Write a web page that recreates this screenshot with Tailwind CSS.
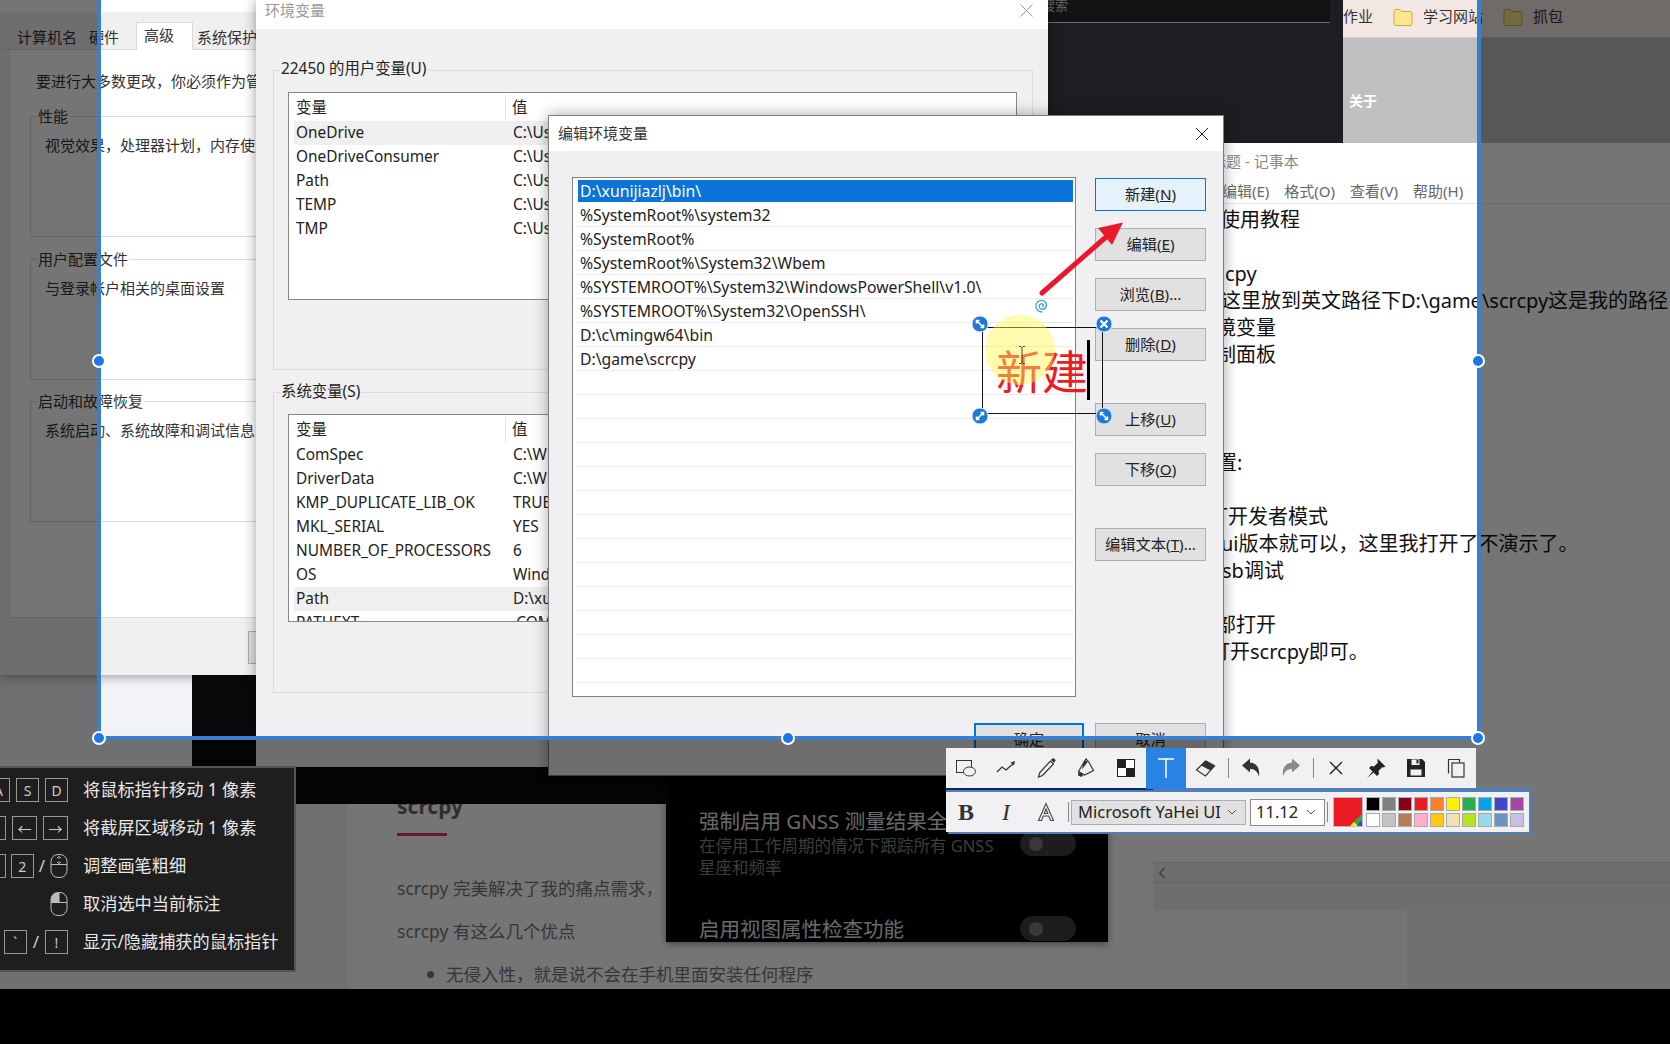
<!DOCTYPE html>
<html lang="zh">
<head>
<meta charset="utf-8">
<title>编辑环境变量</title>
<script src="https://cdn.jsdelivr.net/npm/@tailwindcss/browser@4"></script>
</head>
<body class="bg-black">
<div class="relative w-[1670px] h-[1044px] overflow-hidden bg-[#f2f3f7] text-[15px] text-[#222] font-['Noto_Sans','Noto_Sans_CJK_SC',sans-serif]">

  <!-- web article behind everything -->
  <section class="absolute left-[347px] top-[767px] w-[1060px] h-[222px] bg-white pl-[50px] pt-[25px] text-[#777] text-[17.500px]">
    <h2 class="text-[21px] font-bold text-[#666] leading-[28px]">scrcpy</h2>
    <div class="w-[50px] h-[3px] bg-[#e8385f] mt-[13px]"></div>
    <p class="mt-[38px] leading-[28px]">scrcpy 完美解决了我的痛点需求，</p>
    <p class="mt-[15px] leading-[28px]">scrcpy 有这么几个优点</p>
    <p class="mt-[15px] leading-[28px] flex items-center"><span class="w-[7px] h-[7px] rounded-full bg-[#777] ml-[30px] mr-[12px]"></span>无侵入性，就是说不会在手机里面安装任何程序</p>
  </section>

  <!-- dark window -->
  <div class="absolute left-[192px] top-0 w-[1151px] h-[804px] bg-[#0a0a0d]">
    <div class="h-[143px] bg-[#1e1e22]">
      <div class="h-[23px] bg-[#131316] border-b border-[#6d6d70] mr-[13px] pl-[850px] text-[13px] leading-[10px] text-[#666]">搜索</div>
    </div>
  </div>

  <!-- browser chrome -->
  <div class="absolute left-[1343px] top-0 w-[327px] h-[143px] bg-[#bfbec0]">
    <div class="h-[38px] pb-[4px] bg-[#f3e7e4] border-b border-[#d5cdcb] flex items-center text-[15px] text-[#333]">
      <span>作业</span>
      <svg class="ml-[20px]" width="20" height="20" viewBox="0 0 20 20"><path d="M1 4.500a2 2 0 0 1 2-2h4l2 2h8a2 2 0 0 1 2 2v10a2 2 0 0 1-2 2H3a2 2 0 0 1-2-2z" fill="#fde68f" stroke="#c9a94c"/></svg>
      <span class="ml-[10px] w-[62px] whitespace-nowrap">学习网站</span>
      <svg class="ml-[18px]" width="20" height="20" viewBox="0 0 20 20"><path d="M1 4.500a2 2 0 0 1 2-2h4l2 2h8a2 2 0 0 1 2 2v10a2 2 0 0 1-2 2H3a2 2 0 0 1-2-2z" fill="#fde68f" stroke="#c9a94c"/></svg>
      <span class="ml-[10px]">抓包</span>
    </div>
    <div class="pl-[6px] pt-[52px] text-[14px] font-bold text-white leading-[22px]">关于</div>
  </div>

  <!-- notepad -->
  <div class="absolute left-[1153px] top-[143px] w-[517px] h-[768px] bg-white flex flex-col">
    <div class="h-[37px] pl-[43px] flex items-center text-[15px] text-[#888] shrink-0">无标题 - 记事本</div>
    <div class="h-[24px] pl-[69px] flex gap-[15px] items-center text-[15px] text-[#666] border-b border-[#e4e4e4] shrink-0">
      <span>编辑(E)</span><span>格式(O)</span><span>查看(V)</span><span>帮助(H)</span>
    </div>
    <div class="flex-1 pt-[2px] text-[20px] leading-[27px] text-[#111] whitespace-nowrap">
      <p class="ml-[67px]">使用教程</p>
      <p class="h-[27px]"></p>
      <p class="ml-[72px]">cpy</p>
      <p class="ml-[68px]">这里放到英文路径下D:\game\scrcpy这是我的路径</p>
      <p class="ml-[63px]">境变量</p>
      <p class="ml-[63px]">制面板</p>
      <p class="h-[81px]"></p>
      <p class="ml-[64px]">置:</p>
      <p class="h-[27px]"></p>
      <p class="ml-[55px]">打开发者模式</p>
      <p class="ml-[68px]">ui版本就可以，这里我打开了不演示了。</p>
      <p class="ml-[69px]">sb调试</p>
      <p class="h-[27px]"></p>
      <p class="ml-[63px]">部打开</p>
      <p class="ml-[57px]">打开scrcpy即可。</p>
    </div>
    <div class="h-[20px] bg-[#f0f0f0] border-t border-[#ddd] flex items-center pl-[4px] shrink-0">
      <svg width="10" height="14" viewBox="0 0 10 14"><path d="M7.500 2 3 7l4.500 5" fill="none" stroke="#888" stroke-width="1.500"/></svg>
    </div>
    <div class="h-[29px] bg-[#f0f0f0] border-t border-[#d8d8d8] shrink-0"></div>
  </div>

  <!-- developer options panel -->
  <div class="absolute left-[666px] top-[776px] w-[442px] h-[166px] bg-black overflow-hidden shadow-[0_2px_8px_rgba(0,0,0,0.4)]">
    <div class="absolute left-[33px] top-[31px] w-[320px]">
      <div class="text-[20.500px] leading-[28px] text-[#e4e4e4] whitespace-nowrap">强制启用 GNSS 测量结果全</div>
      <div class="text-[16.500px] leading-[22px] text-[#858585] whitespace-nowrap">在停用工作周期的情况下跟踪所有 GNSS<br>星座和频率</div>
      <div class="text-[20.500px] leading-[28px] text-[#e4e4e4] mt-[36px]">启用视图属性检查功能</div>
    </div>
    <div class="absolute left-[354px] top-[55px] w-[56px] h-[25px] rounded-full bg-[#3f3f3f] flex items-center pl-[9px]"><span class="w-[14px] h-[14px] rounded-full bg-[#7a7a7a]"></span></div>
    <div class="absolute left-[354px] top-[140px] w-[56px] h-[25px] rounded-full bg-[#3f3f3f] flex items-center pl-[9px]"><span class="w-[14px] h-[14px] rounded-full bg-[#7a7a7a]"></span></div>
  </div>

  <!-- system properties window -->
  <div class="absolute left-0 top-0 w-[300px] h-[675px] bg-[#f0f0f0] shadow-[0_2px_10px_rgba(0,0,0,0.35)]">
    <div class="h-[12px] bg-white"></div>
    <div class="relative h-[38px] border-b border-[#d9d9d9] whitespace-nowrap text-[#333]">
      <span class="absolute left-[17px] top-[14px] leading-[22px]">计算机名</span>
      <span class="absolute left-[89px] top-[14px] leading-[22px]">硬件</span>
      <div class="absolute left-[136px] top-[10px] w-[57px] h-[29px] bg-white border border-b-0 border-[#d9d9d9] pl-[7px] leading-[24px]">高级</div>
      <span class="absolute left-[197px] top-[14px] leading-[22px]">系统保护</span>
    </div>
    <div class="relative ml-[10px] h-[568px] bg-white border-b border-[#d9d9d9] whitespace-nowrap text-[#333]">
      <p class="absolute left-[26px] top-[20px] leading-[22px]">要进行大多数更改，你必须作为管理员登录</p>
      <div class="absolute left-[20px] top-[66px] w-[280px] h-[121px] border border-[#dcdcdc]">
        <span class="absolute left-[6px] -top-[11px] px-[1px] bg-white leading-[20px]">性能</span>
        <p class="absolute left-[14px] top-[17px] leading-[22px]">视觉效果，处理器计划，内存使用</p>
      </div>
      <div class="absolute left-[20px] top-[209px] w-[280px] h-[121px] border border-[#dcdcdc]">
        <span class="absolute left-[6px] -top-[11px] px-[1px] bg-white leading-[20px]">用户配置文件</span>
        <p class="absolute left-[14px] top-[17px] leading-[22px]">与登录帐户相关的桌面设置</p>
      </div>
      <div class="absolute left-[20px] top-[351px] w-[280px] h-[121px] border border-[#dcdcdc]">
        <span class="absolute left-[6px] -top-[11px] px-[1px] bg-white leading-[20px]">启动和故障恢复</span>
        <p class="absolute left-[14px] top-[17px] leading-[22px]">系统启动、系统故障和调试信息</p>
      </div>
    </div>
    <div class="absolute left-[248px] top-[631px] w-[60px] h-[33px] bg-[#e1e1e1] border border-[#adadad]"></div>
  </div>

  <!-- environment variables window -->
  <div class="absolute left-[256px] top-0 w-[792px] h-[767px] bg-[#f0f0f2] text-[15.400px] shadow-[0_0_12px_rgba(0,0,0,0.4)]">
    <div class="h-[29px] bg-white flex items-center justify-between pl-[9px] pr-[15px] text-[#999] text-[15px]">
      <span class="-mt-[9px]">环境变量</span>
      <svg class="-mt-[9px]" width="13" height="13" viewBox="0 0 13 13"><path d="M.5.5l12 12M12.500.5l-12 12" stroke="#999"/></svg>
    </div>
    <!-- user vars -->
    <div class="relative ml-[17px] mt-[41px] w-[760px] h-[300px] border border-[#dcdcdc]">
      <span class="absolute left-[6px] -top-[13px] px-[1px] bg-[#f0f0f2] leading-[22px] whitespace-nowrap">22450 的用户变量(U)</span>
      <div class="absolute left-[14px] top-[21px] w-[729px] h-[208px] bg-white border border-[#888] pl-[5px] pt-[2px]">
        <div class="h-[26px] flex items-center pl-[2px]"><span class="w-[210px] border-r border-[#e5e5e5] h-full flex items-center">变量</span><span class="pl-[6px]">值</span></div>
        <div class="h-[24px] flex items-center pl-[2px] bg-[#efeff0]"><span class="w-[210px]">OneDrive</span><span class="pl-[7px]">C:\Users\22450\OneDrive</span></div>
        <div class="h-[24px] flex items-center pl-[2px]"><span class="w-[210px]">OneDriveConsumer</span><span class="pl-[7px]">C:\Users\22450\OneDrive</span></div>
        <div class="h-[24px] flex items-center pl-[2px]"><span class="w-[210px]">Path</span><span class="pl-[7px]">C:\Users\22450\AppData</span></div>
        <div class="h-[24px] flex items-center pl-[2px]"><span class="w-[210px]">TEMP</span><span class="pl-[7px]">C:\Users\22450\AppData</span></div>
        <div class="h-[24px] flex items-center pl-[2px]"><span class="w-[210px]">TMP</span><span class="pl-[7px]">C:\Users\22450\AppData</span></div>
      </div>
    </div>
    <!-- system vars -->
    <div class="relative ml-[17px] mt-[22px] w-[760px] h-[301px] border border-[#dcdcdc]">
      <span class="absolute left-[6px] -top-[12px] px-[1px] bg-[#f0f0f2] leading-[22px]">系统变量(S)</span>
      <div class="absolute left-[14px] top-[21px] w-[729px] h-[208px] bg-white border border-[#888] pl-[5px] pt-[2px] overflow-hidden">
        <div class="h-[26px] flex items-center pl-[2px]"><span class="w-[210px] border-r border-[#e5e5e5] h-full flex items-center">变量</span><span class="pl-[6px]">值</span></div>
        <div class="h-[24px] flex items-center pl-[2px]"><span class="w-[210px]">ComSpec</span><span class="pl-[7px]">C:\Windows\system32</span></div>
        <div class="h-[24px] flex items-center pl-[2px]"><span class="w-[210px]">DriverData</span><span class="pl-[7px]">C:\Windows\System32</span></div>
        <div class="h-[24px] flex items-center pl-[2px]"><span class="w-[210px]">KMP_DUPLICATE_LIB_OK</span><span class="pl-[7px]">TRUE</span></div>
        <div class="h-[24px] flex items-center pl-[2px]"><span class="w-[210px]">MKL_SERIAL</span><span class="pl-[7px]">YES</span></div>
        <div class="h-[24px] flex items-center pl-[2px]"><span class="w-[210px]">NUMBER_OF_PROCESSORS</span><span class="pl-[7px]">6</span></div>
        <div class="h-[24px] flex items-center pl-[2px]"><span class="w-[210px]">OS</span><span class="pl-[7px]">Windows_NT</span></div>
        <div class="h-[24px] flex items-center pl-[2px] bg-[#efeff0]"><span class="w-[210px]">Path</span><span class="pl-[7px]">D:\xunijiazlj\bin</span></div>
        <div class="h-[24px] flex items-center pl-[2px]"><span class="w-[210px]">PATHEXT</span><span class="pl-[7px]">.COM;.EXE</span></div>
      </div>
    </div>
  </div>

  <!-- edit dialog -->
  <div class="absolute left-[548px] top-[115px] w-[676px] h-[661px] bg-[#f0f0f2] border border-[#7d7d7d] shadow-[0_0_14px_rgba(0,0,0,0.35)] flex flex-col">
    <div class="h-[35px] bg-white flex items-center justify-between pl-[9px] pr-[14px] shrink-0">
      <span class="text-[#333]">编辑环境变量</span>
      <svg width="14" height="14" viewBox="0 0 14 14"><path d="M1 1l12 12M13 1L1 13" stroke="#222"/></svg>
    </div>
    <div class="flex pl-[23px] pt-[26px]">
      <div class="w-[504px] h-[520px] bg-white border border-[#838383] p-[2px] pl-[5px] text-[15.750px] text-[#222] overflow-hidden">
        <div class="h-[22px] mb-[1px] bg-[#0a74d8] text-white pl-[2px] leading-[22px]">D:\xunijiazlj\bin\</div>
        <div class="h-[24px] pl-[2px] leading-[24px] border-b border-[#ececec]">%SystemRoot%\system32</div>
        <div class="h-[24px] pl-[2px] leading-[24px] border-b border-[#ececec]">%SystemRoot%</div>
        <div class="h-[24px] pl-[2px] leading-[24px] border-b border-[#ececec]">%SystemRoot%\System32\Wbem</div>
        <div class="h-[24px] pl-[2px] leading-[24px] border-b border-[#ececec]">%SYSTEMROOT%\System32\WindowsPowerShell\v1.0\</div>
        <div class="h-[24px] pl-[2px] leading-[24px] border-b border-[#ececec]">%SYSTEMROOT%\System32\OpenSSH\</div>
        <div class="h-[24px] pl-[2px] leading-[24px] border-b border-[#ececec]">D:\c\mingw64\bin</div>
        <div class="h-[24px] pl-[2px] leading-[24px] border-b border-[#ececec]">D:\game\scrcpy</div>
        <div class="h-[24px] border-b border-[#ececec]"></div>
        <div class="h-[24px] border-b border-[#ececec]"></div>
        <div class="h-[24px] border-b border-[#ececec]"></div>
        <div class="h-[24px] border-b border-[#ececec]"></div>
        <div class="h-[24px] border-b border-[#ececec]"></div>
        <div class="h-[24px] border-b border-[#ececec]"></div>
        <div class="h-[24px] border-b border-[#ececec]"></div>
        <div class="h-[24px] border-b border-[#ececec]"></div>
        <div class="h-[24px] border-b border-[#ececec]"></div>
        <div class="h-[24px] border-b border-[#ececec]"></div>
        <div class="h-[24px] border-b border-[#ececec]"></div>
        <div class="h-[24px] border-b border-[#ececec]"></div>
        <div class="h-[24px] border-b border-[#ececec]"></div>
      </div>
      <div class="ml-[19px] mt-[1px] w-[111px] flex flex-col text-[15.250px] text-[#222]">
        <div class="h-[33px] bg-[#e5f1fb] border border-[#0078d7] flex items-center justify-center"><span>新建(<u>N</u>)</span></div>
        <div class="h-[33px] mt-[17px] bg-[#e1e1e1] border border-[#adadad] flex items-center justify-center"><span>编辑(<u>E</u>)</span></div>
        <div class="h-[33px] mt-[17px] bg-[#e1e1e1] border border-[#adadad] flex items-center justify-center"><span>浏览(<u>B</u>)...</span></div>
        <div class="h-[33px] mt-[17px] bg-[#e1e1e1] border border-[#adadad] flex items-center justify-center"><span>删除(<u>D</u>)</span></div>
        <div class="h-[33px] mt-[42px] bg-[#e1e1e1] border border-[#adadad] flex items-center justify-center"><span>上移(<u>U</u>)</span></div>
        <div class="h-[33px] mt-[17px] bg-[#e1e1e1] border border-[#adadad] flex items-center justify-center"><span>下移(<u>O</u>)</span></div>
        <div class="h-[33px] mt-[42px] bg-[#e1e1e1] border border-[#adadad] flex items-center justify-center"><span>编辑文本(<u>T</u>)...</span></div>
      </div>
    </div>
    <div class="absolute left-[425px] top-[607px] w-[110px] h-[33px] bg-[#e1e1e1] border-2 border-[#0078d7] flex items-center justify-center text-[15.250px]">确定</div>
    <div class="absolute left-[546px] top-[607px] w-[111px] h-[33px] bg-[#e1e1e1] border border-[#adadad] flex items-center justify-center text-[15.250px]">取消</div>
  </div>

  <!-- annotations: arrow + spiral -->
  <svg class="absolute left-[1030px] top-[215px]" width="100" height="105" viewBox="1030 215 100 105">
    <path d="M1042 293 1106 237" stroke="#e8192c" stroke-width="5" stroke-linecap="round"/>
    <path d="M1123 222.500 1098 228 1112 245z" fill="#e8192c"/>
    <path d="M1042 306.500c1.200 0 1.800-1.500.8-2.300-1.400-1-3.600 0-3.600 2 0 2.300 2.500 3.600 4.500 2.800 2.600-1 3.400-4.300 1.900-6.500-1.800-2.500-5.700-2.800-7.900-.8-2.300 2.100-2.400 5.900-.4 8.200 1.300 1.500 3.300 2.200 5.200 2" fill="none" stroke="#4a9fdf" stroke-width="1.400"/>
  </svg>

  <!-- text annotation box -->
  <div class="absolute left-[982px] top-[327px] w-[121px] h-[87px] border border-[#111]"></div>
  <div class="absolute left-[996px] top-[334px] text-[46px] leading-[70px] text-[#ed1c24] font-['Noto_Sans_CJK_SC',sans-serif]">新建</div>
  <div class="absolute left-[1087px] top-[340px] w-[3px] h-[60px] bg-black"></div>
  <div class="absolute left-[985px] top-[315px] w-[70px] h-[70px] rounded-full bg-[#fff94f]/45"></div>
  <svg class="absolute left-[1018px] top-[346px]" width="8" height="18" viewBox="0 0 8 18"><path d="M1 .5h2l1 1 1-1h2M4 1.500v15M1 17.500h2l1-1 1 1h2" fill="none" stroke="#222" stroke-width=".8"/></svg>
  <svg class="absolute left-[971px] top-[315px]" width="18" height="18" viewBox="0 0 18 18"><circle cx="9" cy="9" r="8" fill="#1f77d8" stroke="#dbe9f8"/><path d="M5.500 5.500l7 7M5.500 8.500v-3h3M12.500 9.500v3h-3" fill="none" stroke="#fff" stroke-width="1.600"/></svg>
  <svg class="absolute left-[1095px] top-[315px]" width="18" height="18" viewBox="0 0 18 18"><circle cx="9" cy="9" r="8" fill="#1f77d8" stroke="#dbe9f8"/><path d="M5.500 5.500l7 7M12.500 5.500l-7 7" fill="none" stroke="#fff" stroke-width="2.200"/></svg>
  <svg class="absolute left-[971px] top-[407px]" width="18" height="18" viewBox="0 0 18 18"><circle cx="9" cy="9" r="8" fill="#1f77d8" stroke="#dbe9f8"/><path d="M5.500 12.500l7-7M9.500 5.500h3v3M5.500 9.500v3h3" fill="none" stroke="#fff" stroke-width="1.600"/></svg>
  <svg class="absolute left-[1095px] top-[407px]" width="18" height="18" viewBox="0 0 18 18"><circle cx="9" cy="9" r="8" fill="#1f77d8" stroke="#dbe9f8"/><path d="M5.500 5.500l7 7M5.500 8.500v-3h3M12.500 9.500v3h-3" fill="none" stroke="#fff" stroke-width="1.600"/></svg>

  <!-- dim overlays outside the capture selection -->
  <div class="absolute left-0 top-0 w-[97px] h-[989px] bg-black/54"></div>
  <div class="absolute left-[1481px] top-0 w-[189px] h-[989px] bg-black/54"></div>
  <div class="absolute left-[97px] top-[740px] w-[1384px] h-[249px] bg-black/54"></div>
  <div class="absolute left-0 top-[989px] w-[1670px] h-[55px] bg-black"></div>

  <!-- selection frame -->
  <div class="absolute left-[97px] -top-[10px] w-[1384px] h-[750px] border-4 border-[#3a7fcc]"></div>
  <span class="absolute left-[92px] top-[354px] w-[14px] h-[14px] rounded-full bg-[#1f77e6] border-2 border-white"></span>
  <span class="absolute left-[1471px] top-[354px] w-[14px] h-[14px] rounded-full bg-[#1f77e6] border-2 border-white"></span>
  <span class="absolute left-[92px] top-[731px] w-[14px] h-[14px] rounded-full bg-[#1f77e6] border-2 border-white"></span>
  <span class="absolute left-[781px] top-[731px] w-[14px] h-[14px] rounded-full bg-[#1f77e6] border-2 border-white"></span>
  <span class="absolute left-[1471px] top-[731px] w-[14px] h-[14px] rounded-full bg-[#1f77e6] border-2 border-white"></span>

  <!-- annotation toolbar -->
  <div class="absolute left-[946px] top-[748px] w-[530px] h-[40px] bg-[#f1f1f4] flex items-center text-[#333]">
    <span class="w-[40px] h-[40px] flex items-center justify-center"><svg width="22" height="20" viewBox="0 0 22 20"><rect x="1.500" y="2.500" width="15" height="12" fill="none" stroke="#333"/><ellipse cx="14.500" cy="13.500" rx="6" ry="4.500" fill="#f1f1f4" stroke="#333"/></svg></span>
    <span class="w-[40px] h-[40px] flex items-center justify-center"><svg width="22" height="20" viewBox="0 0 22 20"><path d="M2 14l5-5 4 3 8-7" fill="none" stroke="#333" stroke-width="1.300"/><path d="M15.500 4.500l4.500-1.500-1 4.500z" fill="#333"/></svg></span>
    <span class="w-[40px] h-[40px] flex items-center justify-center"><svg width="22" height="22" viewBox="0 0 22 22"><path d="M3.500 20l1.300-4.500L15.500 4l3 3L7.500 18.500z" fill="none" stroke="#333" stroke-width="1.200"/><path d="M16 3l1-1.200a1.500 1.500 0 0 1 2.500 0l.5.700a1.500 1.500 0 0 1 0 2L19 5.800z" fill="#333"/></svg></span>
    <span class="w-[40px] h-[40px] flex items-center justify-center"><svg width="22" height="22" viewBox="0 0 22 22"><path d="M11 2l2.500 2.500 5 9-9 4.500-6-3.500z" fill="none" stroke="#333" stroke-width="1.200"/><path d="M9 3.500l4 1-6 8zM3.500 14.500l5 3-2 2.500-3.500-1.500z" fill="#333"/></svg></span>
    <span class="w-[40px] h-[40px] flex items-center justify-center"><svg width="18" height="18" viewBox="0 0 18 18"><rect x=".5" y=".5" width="17" height="17" fill="#fff" stroke="#222"/><rect x="1" y="1" width="8" height="8" fill="#222"/><rect x="9" y="9" width="8" height="8" fill="#222"/></svg></span>
    <span class="w-[40px] h-[40px] flex items-center justify-center bg-[#2a82e4]"><svg width="18" height="24" viewBox="0 0 18 24"><path d="M1 3h16M9 3v19" fill="none" stroke="#fff" stroke-width="1.500"/></svg></span>
    <span class="w-[40px] h-[40px] flex items-center justify-center"><svg width="22" height="20" viewBox="0 0 22 20"><path d="M1.500 12l9-9 9 5-9 10z" fill="none" stroke="#333" stroke-width="1.200"/><path d="M6 7.500l5-5 9 5-4.500 5z" fill="#333"/></svg></span>
    <span class="w-[1px] h-[20px] bg-[#888] mx-[2px]"></span>
    <span class="w-[40px] h-[40px] flex items-center justify-center"><svg width="22" height="24" viewBox="0 0 22 24"><path d="M2 9.500 10 2.500v4c6 .5 10 4.500 9 14-1.500-5-4-7.500-9-7.500v3.500z" fill="#333"/></svg></span>
    <span class="w-[40px] h-[40px] flex items-center justify-center"><svg width="22" height="24" viewBox="0 0 22 24"><path d="M20 9.500 12 2.500v4c-6 .5-10 4.500-9 14 1.500-5 4-7.500 9-7.500v3.500z" fill="#8a8a8a"/></svg></span>
    <span class="w-[1px] h-[20px] bg-[#888] mx-[2px]"></span>
    <span class="w-[40px] h-[40px] flex items-center justify-center"><svg width="14" height="14" viewBox="0 0 14 14"><path d="M1 1l12 12M13 1 1 13" fill="none" stroke="#222" stroke-width="1.400"/></svg></span>
    <span class="w-[40px] h-[40px] flex items-center justify-center"><svg width="22" height="22" viewBox="0 0 22 22"><path d="M12.500 1.500l8 8-2 1-1-.5-4 4 .5 3-2 2-3.500-3.500-6.500 5.500 5.500-6.500-3.500-3.500 2-2 3 .5 4-4-.5-1z" fill="#222"/></svg></span>
    <span class="w-[40px] h-[40px] flex items-center justify-center"><svg width="20" height="20" viewBox="0 0 20 20"><path d="M1 1h15l3 3v15H1z" fill="#222"/><rect x="5.500" y="1.500" width="8" height="5.500" fill="#f1f1f4"/><rect x="10.500" y="2" width="2" height="3.500" fill="#222"/><rect x="4.500" y="11.500" width="11" height="6" fill="#f1f1f4"/></svg></span>
    <span class="w-[40px] h-[40px] flex items-center justify-center"><svg width="18" height="20" viewBox="0 0 18 20"><path d="M1.500 15.500V1.500h11v3" fill="none" stroke="#333" stroke-width="1.200"/><rect x="5" y="5" width="12" height="14" fill="#f1f1f4" stroke="#333" stroke-width="1.200"/></svg></span>
  </div>

  <div class="absolute left-[946px] top-[792px] w-[583px] h-[40px] bg-[#f1f1f4] flex items-center text-[#333] shadow-[2px_2px_0_#4f7fb6,0_-4px_0_#4f7fb6]">
    <span class="w-[40px] flex justify-center text-[24px] leading-none font-bold font-['Liberation_Serif',serif]">B</span>
    <span class="w-[40px] flex justify-center text-[24px] leading-none italic font-['Liberation_Serif',serif]">I</span>
    <span class="w-[40px] flex justify-center"><svg width="18" height="20" viewBox="0 0 18 20"><path d="M9 1.500 1.500 18.500h3l1.800-4.500h5.400l1.800 4.500h3zM7.200 11.500 9 7l1.800 4.500z" fill="none" stroke="#444" stroke-width="1.100"/></svg></span>
    <span class="w-[1px] h-[20px] bg-[#888] ml-[2px] mr-[2px]"></span>
    <div class="w-[175px] h-[25px] bg-[#e1e1e1] border border-[#adadad] flex items-center justify-between pl-[6px] pr-[8px] text-[16.500px] text-[#222] whitespace-nowrap">
      <span>Microsoft YaHei UI</span>
      <svg width="10" height="6" viewBox="0 0 10 6"><path d="M1 1l4 4 4-4" fill="none" stroke="#555"/></svg>
    </div>
    <div class="w-[75px] h-[27px] ml-[4px] bg-white border border-[#8a8a8a] flex items-center justify-between pl-[5px] pr-[8px] text-[16.500px] text-[#222]">
      <span>11.12</span>
      <svg width="10" height="6" viewBox="0 0 10 6"><path d="M1 1l4 4 4-4" fill="none" stroke="#555"/></svg>
    </div>
    <span class="w-[1px] h-[20px] bg-[#888] ml-[2px] mr-[5px]"></span>
    <div class="relative w-[30px] h-[30px] bg-[#ed1c24] border border-[#b9b9b9] shrink-0">
      <svg class="absolute right-0 bottom-0" width="12" height="12" viewBox="0 0 12 12"><path d="M12 0v12H0z" fill="#22b14c"/><path d="M12 6v6H6z" fill="#3f48cc"/><path d="M4 8l4 4H0z" fill="#fff200"/></svg>
    </div>
    <div class="grid grid-cols-[repeat(10,14px)] grid-rows-[repeat(2,14px)] gap-x-[2px] gap-y-[2px] ml-[3px]">
      <span class="bg-[#000000] border border-[#aaa]"></span><span class="bg-[#7f7f7f] border border-[#aaa]"></span><span class="bg-[#880015] border border-[#aaa]"></span><span class="bg-[#ed1c24] border border-[#aaa]"></span><span class="bg-[#ff7f27] border border-[#aaa]"></span><span class="bg-[#fff200] border border-[#aaa]"></span><span class="bg-[#22b14c] border border-[#aaa]"></span><span class="bg-[#00a2e8] border border-[#aaa]"></span><span class="bg-[#3f48cc] border border-[#aaa]"></span><span class="bg-[#a349a4] border border-[#aaa]"></span>
      <span class="bg-[#ffffff] border border-[#aaa]"></span><span class="bg-[#c3c3c3] border border-[#aaa]"></span><span class="bg-[#b97a57] border border-[#aaa]"></span><span class="bg-[#ffaec9] border border-[#aaa]"></span><span class="bg-[#ffc90e] border border-[#aaa]"></span><span class="bg-[#efe4b0] border border-[#aaa]"></span><span class="bg-[#b5e61d] border border-[#aaa]"></span><span class="bg-[#99d9ea] border border-[#aaa]"></span><span class="bg-[#7092be] border border-[#aaa]"></span><span class="bg-[#c8bfe7] border border-[#aaa]"></span>
    </div>
  </div>
  <div class="absolute left-[946px] top-[788px] w-[207px] h-[2px] bg-[#0a2a66]"></div>
  <div class="absolute left-[1146px] top-[788px] w-[40px] h-[1px] bg-[#2a82e4]"></div>

  <!-- shortcut help panel -->
  <div class="absolute left-0 top-[766px] w-[296px] h-[206px] bg-[#1e1e1e] border-t-2 border-r-2 border-b-2 border-[#555] text-[#e8e8e8] text-[17.200px] pt-[3px]">
    <div class="h-[38px] flex items-center">
      <div class="w-[68px] flex justify-end gap-[6px] overflow-hidden shrink-0 text-[14px] text-[#ccc]">
        <span class="w-[23px] h-[24px] border border-[#999] flex items-center justify-center shrink-0">A</span>
        <span class="w-[23px] h-[24px] border border-[#999] flex items-center justify-center shrink-0">S</span>
        <span class="w-[23px] h-[24px] border border-[#999] flex items-center justify-center shrink-0">D</span>
      </div>
      <span class="ml-[15px] whitespace-nowrap">将鼠标指针移动 1 像素</span>
    </div>
    <div class="h-[38px] flex items-center">
      <div class="w-[68px] flex justify-end gap-[6px] overflow-hidden shrink-0 text-[14px] text-[#ccc]">
        <span class="w-[25px] h-[24px] border border-[#999] flex items-center justify-center shrink-0">↑</span>
        <span class="w-[25px] h-[24px] border border-[#999] flex items-center justify-center shrink-0">←</span>
        <span class="w-[25px] h-[24px] border border-[#999] flex items-center justify-center shrink-0">→</span>
      </div>
      <span class="ml-[15px] whitespace-nowrap">将截屏区域移动 1 像素</span>
    </div>
    <div class="h-[38px] flex items-center">
      <div class="w-[68px] flex justify-end items-center gap-[5px] overflow-hidden shrink-0 text-[14px] text-[#ccc]">
        <span class="w-[23px] h-[24px] border border-[#999] flex items-center justify-center shrink-0">1</span>
        <span class="w-[23px] h-[24px] border border-[#999] flex items-center justify-center shrink-0">2</span>
        <span class="text-[17px]">/</span>
        <svg class="shrink-0" width="18" height="24" viewBox="0 0 18 24"><rect x="1" y=".5" width="16" height="23" rx="7" fill="none" stroke="#bbb"/><path d="M1 10.500h16M9 4v1M9 7.500v1M7 4l2-1.500L11 4M7 8l2 1.500L11 8" fill="none" stroke="#bbb"/></svg>
      </div>
      <span class="ml-[15px] whitespace-nowrap">调整画笔粗细</span>
    </div>
    <div class="h-[38px] flex items-center">
      <div class="w-[68px] flex justify-end shrink-0">
        <svg width="18" height="24" viewBox="0 0 18 24"><rect x="1" y=".5" width="16" height="23" rx="7" fill="none" stroke="#bbb"/><path d="M9 .5H8A7 7 0 0 0 1 7.500v3h8z" fill="#bbb"/><path d="M1 10.500h16M9 .5v10" fill="none" stroke="#bbb"/></svg>
      </div>
      <span class="ml-[15px] whitespace-nowrap">取消选中当前标注</span>
    </div>
    <div class="h-[38px] flex items-center">
      <div class="w-[68px] flex justify-end items-center gap-[6px] overflow-hidden shrink-0 text-[14px] text-[#ccc]">
        <span class="w-[23px] h-[24px] border border-[#999] flex items-center justify-center shrink-0">`</span>
        <span class="text-[17px]">/</span>
        <span class="w-[23px] h-[24px] border border-[#999] flex items-center justify-center shrink-0">!</span>
      </div>
      <span class="ml-[15px] whitespace-nowrap">显示/隐藏捕获的鼠标指针</span>
    </div>
  </div>

</div>
</body>
</html>
